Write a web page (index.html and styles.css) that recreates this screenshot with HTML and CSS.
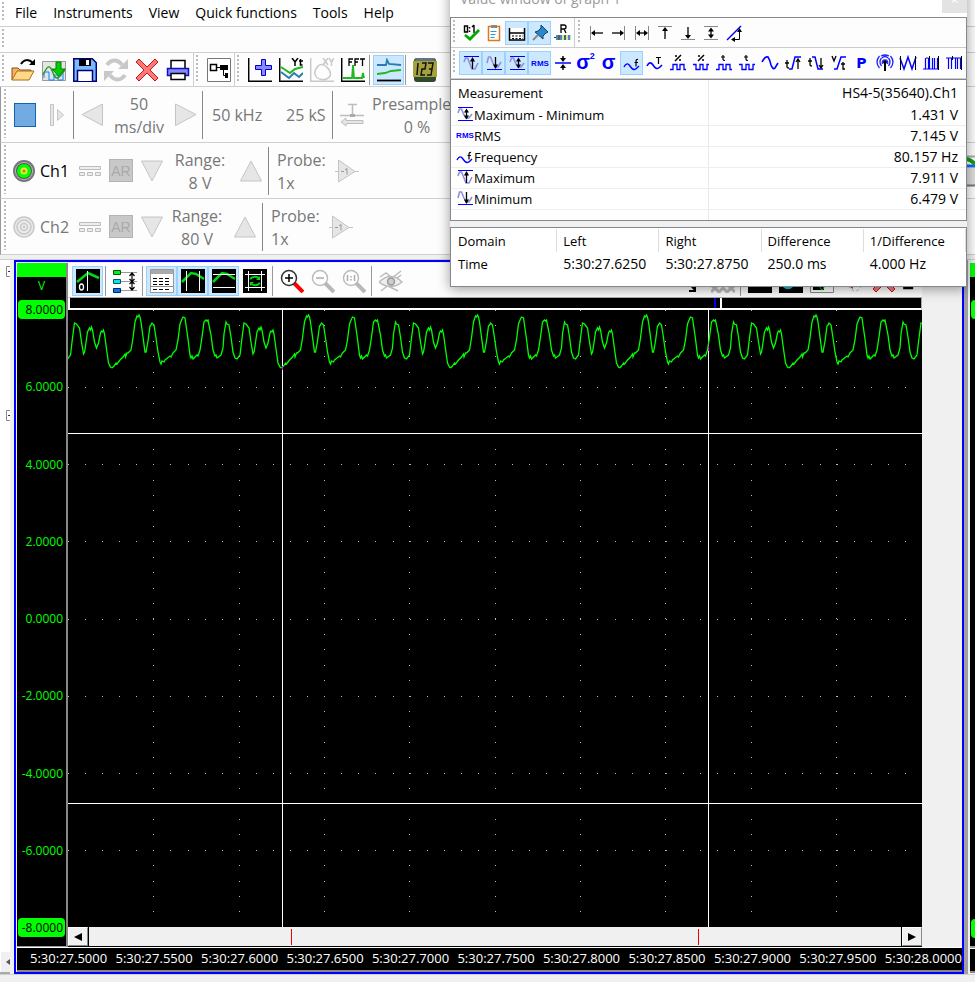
FILE: index.html
```html
<!DOCTYPE html>
<html lang="en">
<head>
<meta charset="utf-8">
<title>Oscilloscope</title>
<link rel="stylesheet" href="styles.css">
</head>
<body>
<svg class="defs" aria-hidden="true">
  <defs>
    <symbol id="max" viewBox="0 0 18 18"><path d="M2 2.500h15" stroke="#00f"/><path d="M2 8l1.500-4h2L8 10l2 5h3l3-6" fill="none" stroke="#8f8fe0" stroke-width="1.600"/><path d="M10.500 15V5" stroke="#000" stroke-width="1.300"/><path d="M10.500 3l2.500 4.500H8z"/></symbol>
    <symbol id="min" viewBox="0 0 18 18"><path d="M2 15.500h15" stroke="#00f"/><path d="M2 9l1.500-6h2L8 9l2 4h3l3-5" fill="none" stroke="#8f8fe0" stroke-width="1.600"/><path d="M10.500 3v9" stroke="#000" stroke-width="1.300"/><path d="M10.500 15L8 10.500h5z"/></symbol>
    <symbol id="maxmin" viewBox="0 0 18 18"><path d="M2 2.500h15M2 15.500h15" stroke="#00f"/><path d="M2 8l1.500-4h2L8 10l2 3h3l3-4" fill="none" stroke="#8f8fe0" stroke-width="1.600"/><path d="M10.500 6v6" stroke="#000" stroke-width="1.300"/><path d="M10.500 3.500l2.500 4H8zM10.500 14.500l-2.500-4h5z"/></symbol>
    <symbol id="rms" viewBox="0 0 18 18"><text x="9" y="12" text-anchor="middle" font-family="Liberation Sans, sans-serif" font-size="8" font-weight="700" fill="#00f">RMS</text></symbol>
    <symbol id="freq" viewBox="0 0 18 18"><path d="M1 13c2-4 4-4 6-1s4 5 7 2l2-2" fill="none" stroke="#00f" stroke-width="1.400"/><path d="M15 5.500q-2-.5-2 2v5M11.500 8.500H15" fill="none" stroke="#000" stroke-width="1.200"/></symbol>
    <symbol id="pulse" viewBox="0 0 18 18"><path d="M1 15.500h3v-5h4v5h3v-5h4v5h2" fill="none" stroke="#00f" stroke-width="1.300"/></symbol>
    <symbol id="pulsen" viewBox="0 0 18 18"><path d="M1 10.500h3v5h4v-5h3v5h4v-5h2" fill="none" stroke="#00f" stroke-width="1.300"/></symbol>
    <symbol id="pct" viewBox="0 0 18 18"><path d="M6 7l6-6M6 2h2M10 6h2" stroke="#000" stroke-width="1.500"/></symbol>
    <symbol id="tee" viewBox="0 0 18 18"><path d="M8 1v4.500q0 1 2 1M6 3h4" fill="none" stroke="#000" stroke-width="1.200"/></symbol>
    <symbol id="lens" viewBox="0 0 24 24"><circle cx="9" cy="9" r="7.500" fill="#fff"/><circle cx="9" cy="9" r="7.500" fill="none" stroke="currentColor" stroke-width="1.500"/></symbol>
  </defs>
</svg>

<nav class="menu bar">
  <i class="grip"></i>
  <a href="#">File</a><a href="#">Instruments</a><a href="#">View</a><a href="#">Quick functions</a><a href="#">Tools</a><a href="#">Help</a>
</nav>
<div class="bar empty"><i class="grip"></i></div>

<div class="bar tools">
  <div class="group"><i class="grip"></i>
    <button aria-label="Open"><svg viewBox="0 0 24 24"><path d="M1 22V10h6l2 2h11v4" fill="#f6b26b" stroke="#8a4a10"/><path d="M1 22l5-9h17l-5 9z" fill="#ffd98a" stroke="#b06a10"/><path d="M10 6c3-5 8-5 12-1" fill="none" stroke="#000" stroke-width="2"/><path d="M24 1v6h-6z"/></svg></button>
    <button aria-label="Import"><svg viewBox="0 0 24 24"><path d="M.5 3.500h23v19H.5z" fill="#e4e4e4" stroke="#999"/><path d="M2 20V14h5v8h5v-5h4v5h5v-9h2" fill="none" stroke="#0a84ff"/><path d="M1 17c5-11 7-10 10-2s6 6 12-4" fill="none" stroke="#2a9a2a" stroke-width="1.500"/><path d="M14 4h5v7h4l-6.500 7L10 11h4z" fill="#00d000" stroke="#0a7a0a"/></svg></button>
    <button aria-label="Save"><svg viewBox="0 0 24 24"><path d="M.8.800h18.500l4 4v18.500H.8z" fill="#7ab8ff" stroke="#00007a" stroke-width="1.500"/><path d="M6 1h12v7H6z"/><path d="M13 2h3v5h-3z" fill="#fff"/><path d="M4.500 23V12.500h15V23" fill="#fff" stroke="#00007a" stroke-width="1.500"/></svg></button>
    <button aria-label="Refresh"><svg viewBox="0 0 24 24" fill="none" stroke="#c8c8c8" stroke-width="4"><path d="M3 7c4-6 11-6 15 0M21 17c-4 6-11 6-15 0"/><path d="M24 1v10H14zM0 23V13h10z" fill="#c8c8c8" stroke="none"/></svg></button>
    <button aria-label="Delete"><svg viewBox="0 0 24 24"><path d="M4 1l8 8 8-8 3 3-8 8 8 8-3 3-8-8-8 8-3-3 8-8-8-8z" fill="#f77" stroke="#c01818"/></svg></button>
    <button aria-label="Print"><svg viewBox="0 0 24 24" stroke-width="1.500"><path d="M5 11V2.500h14V11" fill="#fff" stroke="#000"/><path d="M1.500 10.500h21v7h-21z" fill="#8888ff" stroke="#1010c0"/><path d="M5 15.500h14v6H5z" fill="#fff" stroke="#000"/></svg></button>
  </div>
  <div class="group"><i class="grip"></i>
    <button aria-label="Object tree"><svg viewBox="0 0 24 24"><path d="M.5.500h23v23H.5z" fill="#fff" stroke="#777"/><path d="M3.500 6.500h6v6h-6z" fill="#fff" stroke="#000" stroke-width="1.500"/><path d="M10 9.500h4M16.500 10v7.500H19" fill="none" stroke="#000"/><path d="M13 7h8v5h-8zM18 15h3v5h-3z"/></svg></button>
  </div>
  <div class="group last"><i class="grip"></i>
    <button aria-label="Add graph"><svg viewBox="0 0 24 24"><path d="M.7 0v23.300H24" fill="none" stroke="#000" stroke-width="1.500"/><path d="M13.500 1.500h4v6h6v4h-6v6h-4v-6h-6v-4h6z" fill="#88f" stroke="#00c"/></svg></button>
    <button aria-label="Yt graph"><svg viewBox="0 0 24 24"><path d="M.7 0v23.300H24" fill="none" stroke="#000" stroke-width="1.500"/><path d="M2 9l9 6 5-4 8-2" fill="none" stroke="#1fb81f" stroke-width="2"/><path d="M2 14l8 6 5-5 5 4 4-4" fill="none" stroke="#2b7bb0" stroke-width="2"/><path d="M13 0l3 4 3-4M16 4v4M21.500 1v6h2M20 3h4" fill="none" stroke="#000" stroke-width="1.500"/></svg></button>
    <button aria-label="XY graph"><svg viewBox="0 0 24 24" fill="none" stroke="#c9c9c9" stroke-width="1.500"><path d="M.7 0v23.300H24"/><path d="M8 8c6-5 14 5 12 10-4 6-14 4-15-2q-1-3 3-8M13 0l5 7M18 0l-5 7M19 0l2.500 4L24 0M21.500 4v4"/></svg></button>
    <button aria-label="FFT graph"><svg viewBox="0 0 24 24"><path d="M.7 0v23.300H24" fill="none" stroke="#000" stroke-width="1.500"/><path d="M2 20h9l1-13 1 13h8l1-5 1 5" fill="none" stroke="#1fb81f" stroke-width="1.800"/><path d="M8 8V1h4M8 4h3M14 8V1h4M14 4h3M19 1h5M21.500 1v7" fill="none" stroke="#000" stroke-width="1.300"/></svg></button>
    <i class="sep"></i>
    <button class="on" aria-label="Auto graph"><svg viewBox="0 0 24 24" fill="none" stroke-width="1.800"><path d="M0 7h9l1-5 2 4 12 1" stroke="#2b7bb0"/><path d="M0 16l8-1 6-2 10-1" stroke="#1fb81f"/><path d="M0 22.500h24" stroke="#000"/></svg></button>
    <i class="sep"></i>
    <button aria-label="Meter"><svg viewBox="0 0 24 24"><rect x="1" width="22" height="24" rx="3" fill="#2d4a2d"/><path d="M3 0h18l1 3H2z" fill="#63737f"/><path d="M0 3h24v16H0z" fill="#a5a23d"/><path d="M5 5L4 17M9 5h4l-1 6H9l-1 6h4M15 5h5l-2 12h-4M16 11h3" fill="none" stroke="#111" stroke-width="1.500"/></svg></button>
  </div>
</div>

<section class="bar inst base"><i class="grip"></i>
  <button class="stop" aria-label="Stop"></button>
  <button class="step" aria-label="One shot"><svg viewBox="0 0 14 22"><path d="M.5.500h3v21h-3zM7.500 5.500v11l6-5.500z" fill="#e6e6e6" stroke="#c4c4c4"/></svg></button>
  <i class="rule"></i>
  <button class="tri" aria-label="Shorter time base"><svg viewBox="0 0 22 24"><path d="M21.500 1v21.500L1 11.500z" fill="#e6e6e6" stroke="#c4c4c4"/></svg></button>
  <span class="two timediv">50<br>ms/div</span>
  <button class="tri" aria-label="Longer time base"><svg viewBox="0 0 22 24"><path d="M.5 1v21.500L21 11.500z" fill="#e6e6e6" stroke="#c4c4c4"/></svg></button>
  <i class="rule r2"></i>
  <span class="rate">50 kHz</span><span class="rec">25 kS</span>
  <i class="rule r2"></i>
  <svg class="trig" viewBox="0 0 24 24" fill="none" stroke="#bdbdbd"><path d="M8 1.500h9M12.500 1v11M0 12.500h24" stroke-width="1.500"/><path d="M10 11h5v3h-5z" fill="#aaa" stroke="none"/><path d="M1 19l5-4v2.500h17v3H6V23z" fill="#e6e6e6"/></svg>
  <span class="two pre"><b>Presample</b><br>0 %</span>
</section>

<section class="bar inst chan"><i class="grip"></i>
  <button class="led" aria-label="Channel 1 on"><svg viewBox="0 0 22 22"><circle cx="11" cy="11" r="11" fill="#777"/><circle cx="11" cy="11" r="9" fill="#bbb"/><circle cx="11" cy="11" r="8" fill="#555"/><circle cx="11" cy="11" r="7" fill="#0f0"/><circle cx="11" cy="11" r="3.500" fill="#f3e23c"/><circle cx="11" cy="11" r="1.500" fill="#a80"/></svg></button>
  <span class="name">Ch1</span>
  <svg class="dc" viewBox="0 0 22 10" fill="#eee" stroke="#bbb"><path d="M.5.500h21v3H.5zM.5 6.500h5v3h-5zM8.500 6.500h5v3h-5zM16.500 6.500h5v3h-5z"/></svg>
  <button class="ar">AR</button>
  <button class="tri" aria-label="Lower range"><svg viewBox="0 0 22 24"><path d="M.5 2h21L11 22z" fill="#e6e6e6" stroke="#c4c4c4"/></svg></button>
  <span class="two range">Range:<br>8 V</span>
  <button class="tri" aria-label="Higher range"><svg viewBox="0 0 22 24"><path d="M.5 22h21L11 2z" fill="#e6e6e6" stroke="#c4c4c4"/></svg></button>
  <i class="rule"></i>
  <span class="two probe">Probe:<br>1x</span>
  <button class="amp" aria-label="Invert"><svg viewBox="0 0 24 24"><path d="M0 12.500h24" stroke="#c4c4c4"/><path d="M3.500 1v22L20 12.500z" fill="#e6e6e6" stroke="#c4c4c4"/><path d="M6 12.500h3M10 11l2-1.500v6" fill="none" stroke="#999"/></svg></button>
  <button class="edge" aria-label="Channel view"><svg viewBox="0 0 10 32"><path d="M0 1.500h10" stroke="#aaa" stroke-width="2"/><path d="M0 4q5 0 10 5" fill="none" stroke="#159c15" stroke-width="4"/><path d="M0 11h10" stroke="#0a6fe8" stroke-width="3"/><path d="M2 13h8v17H2z" fill="#ddd"/><path d="M1.500 12v18" stroke="#0a6fe8"/><path d="M1 30.500h9" stroke="#777" stroke-width="2"/></svg></button>
</section>
<section class="bar inst chan ch2"><i class="grip"></i>
  <button class="led" aria-label="Channel 2 off"><svg viewBox="0 0 22 22" fill="#ececec" stroke="#c8c8c8" stroke-width="1.500"><circle cx="11" cy="11" r="10"/><circle cx="11" cy="11" r="7"/><circle cx="11" cy="11" r="3.500"/><circle cx="11" cy="11" r=".5"/></svg></button>
  <span class="name">Ch2</span>
  <svg class="dc" viewBox="0 0 22 10" fill="#eee" stroke="#bbb"><path d="M.5.500h21v3H.5zM.5 6.500h5v3h-5zM8.500 6.500h5v3h-5zM16.500 6.500h5v3h-5z"/></svg>
  <button class="ar">AR</button>
  <button class="tri" aria-label="Lower range"><svg viewBox="0 0 22 24"><path d="M.5 2h21L11 22z" fill="#e6e6e6" stroke="#c4c4c4"/></svg></button>
  <span class="two range">Range:<br>80 V</span>
  <button class="tri" aria-label="Higher range"><svg viewBox="0 0 22 24"><path d="M.5 22h21L11 2z" fill="#e6e6e6" stroke="#c4c4c4"/></svg></button>
  <i class="rule"></i>
  <span class="two probe">Probe:<br>1x</span>
  <button class="amp" aria-label="Invert"><svg viewBox="0 0 24 24"><path d="M0 12.500h24" stroke="#c4c4c4"/><path d="M3.500 1v22L20 12.500z" fill="#e6e6e6" stroke="#c4c4c4"/><path d="M6 12.500h3M10 11l2-1.500v6" fill="none" stroke="#999"/></svg></button>
</section>

<main>
  <aside class="tree">
    <button class="node" aria-label="Collapse sources"><svg viewBox="0 0 4 11"><path d="M4 .5H.5v10H4" fill="none" stroke="#888"/><path d="M2 5.500h2" stroke="#335"/></svg></button>
    <button class="node" aria-label="Collapse sinks"><svg viewBox="0 0 4 11"><path d="M4 .5H.5v10H4" fill="none" stroke="#888"/><path d="M2 5.500h2" stroke="#335"/></svg></button>
    <button class="treescroll" aria-label="Scroll left"><svg viewBox="0 0 4 6"><path d="M4 0v6L0 3z" fill="#555"/></svg></button>
  </aside>
  <section class="graph">
    <div class="upper">
      <div class="yaxis">
        <div class="cap"></div>
        <div class="unit">V</div>
        <div class="yvals"><span class="pill">8.0000</span><span>6.0000</span><span>4.0000</span><span>2.0000</span><span>0.0000</span><span>-2.0000</span><span>-4.0000</span><span>-6.0000</span><span class="pill">-8.0000</span></div>
      </div>
      <div class="scope">
        <div class="gtools">
          <button class="on" aria-label="Single axis"><svg viewBox="0 0 24 24"><path d="M0 0h24v24H0z"/><path d="M1 13L12 4l11 5" fill="none" stroke="#00d818" stroke-width="2.500"/><path d="M11.500 2v20" stroke="#fff"/><ellipse cx="5.500" cy="18" rx="2" ry="3" fill="none" stroke="#fff" stroke-width="1.300"/></svg></button>
          <i class="sep"></i>
          <button aria-label="Spread axes"><svg viewBox="0 0 24 24"><path d="M7 3.500h17M7 12.500h17M7 21.500h17" stroke="#999"/><path d="M.5 1.500h7v4h-7z" fill="#00f020" stroke="#050"/><path d="M.5 10.500h7v4h-7z" fill="#00e8e8" stroke="#055"/><path d="M.5 19.500h7v4h-7z" fill="#0878e8" stroke="#026"/><path d="M19 4v17M16.500 7L19 4l2.500 3M16.500 10l2.500 2.500 2.500-2.500M16.500 15l2.500-2.500 2.500 2.500M16.500 18l2.500 3 2.500-3" fill="none" stroke="#000" stroke-width="1.200"/></svg></button>
          <i class="sep"></i>
          <button class="on" aria-label="Value window"><svg viewBox="0 0 24 24"><path d="M.5.500h23v23H.5z" fill="#fff" stroke="#999"/><path d="M1 1h22v4H1z" fill="#aaa"/><path d="M3 9.500h18M3 12.500h18M3 15.500h18M3 20.500h18" stroke="#000" stroke-width="1.200" stroke-dasharray="4 2"/><path d="M1 17.500h22" stroke="#888"/></svg></button>
          <button class="on" aria-label="Vertical cursors"><svg viewBox="0 0 24 24"><path d="M0 0h24v24H0z"/><path d="M1 13L10 4l5 1 8 5" fill="none" stroke="#00d818" stroke-width="2.500"/><path d="M5.500 2v20M18.500 2v20" stroke="#fff"/></svg></button>
          <button class="on" aria-label="Horizontal cursors"><svg viewBox="0 0 24 24"><path d="M0 0h24v24H0z"/><path d="M1 13L10 4l5 1 8 5" fill="none" stroke="#00d818" stroke-width="2.500"/><path d="M1 5.500h22M1 18.500h22" stroke="#fff"/></svg></button>
          <button aria-label="Reset cursors"><svg viewBox="0 0 24 24"><path d="M0 0h24v24H0z"/><path d="M5.500 2v20M18.500 2v20M2 5.500h20M2 18.500h20" stroke="#fff"/><path d="M7 10q4-4 9-1M17 14q-4 4-9 1" fill="none" stroke="#00d818" stroke-width="2"/><path d="M17 7v4h-4zM7 17v-4h4z" fill="#00d818"/></svg></button>
          <i class="sep"></i>
          <button aria-label="Zoom in"><svg viewBox="0 0 24 24" color="#333"><path d="M14 14l9 9" stroke="#f00" stroke-width="4"/><use href="#lens"/><path d="M5 9h8M9 5v8" stroke="#000" stroke-width="1.500"/></svg></button>
          <button aria-label="Zoom out"><svg viewBox="0 0 24 24" color="#bbb"><path d="M14 14l9 9" stroke="#b8b8b8" stroke-width="4"/><use href="#lens"/><path d="M5 9h8" stroke="#aaa" stroke-width="1.500"/></svg></button>
          <button aria-label="Zoom 1:1"><svg viewBox="0 0 24 24" color="#bbb"><path d="M14 14l9 9" stroke="#b8b8b8" stroke-width="4"/><use href="#lens"/><path d="M5.500 6v6M12.500 6v6M9 7v1.500M9 10v1.500" stroke="#aaa" stroke-width="1.500"/></svg></button>
          <i class="sep"></i>
          <button aria-label="Visibility"><svg viewBox="0 0 24 24" fill="none" stroke="#bbb" stroke-width="1.500"><path d="M1 8l6-4 6 5 9-7M2 22L22 6M3 14l16 8"/><path d="M0 13q12-11 23 0-11 9-23 0z" fill="#eee"/><circle cx="12" cy="12.500" r="3.500" fill="#ccc" stroke="#999"/></svg></button>
          <div class="more">
            <button aria-label="Resize"><svg viewBox="0 0 24 24"><path d="M9 14l6 7M15 16v6H9" fill="none" stroke="#000" stroke-width="2"/></svg></button>
            <button aria-label="Clear overlays"><svg viewBox="0 0 24 24"><path d="M0 23l12-12 12 12M0 16l8 7 4-4 4 4 8-7" fill="none" stroke="#bbb" stroke-width="3"/></svg></button>
            <i class="sep"></i>
            <button aria-label="Color scheme"><svg viewBox="0 0 24 24"><path d="M0 0h24v24H0z"/></svg></button>
            <button aria-label="Line style"><svg viewBox="0 0 24 24"><path d="M0 0h24v24H0z"/><circle cx="9" cy="14" r="5" fill="none" stroke="#00c8d8" stroke-width="2.500"/><path d="M14 15h8" stroke="#00c8d8" stroke-width="2"/></svg></button>
            <button aria-label="Copy"><svg viewBox="0 0 24 24"><path d="M.5.500h23v23H.5z" fill="#fff" stroke="#888"/><path d="M3 3h11v18H3z"/><path d="M5 18q3-6 5 0t4 0" fill="none" stroke="#0c0"/></svg></button>
            <button aria-label="Settings"><svg viewBox="0 0 24 24"><circle cx="14" cy="16" r="6" fill="#fff" stroke="#bbb" stroke-dasharray="3 2"/><path d="M9 18l3 2v-4z" fill="#c33"/></svg></button>
            <button aria-label="Remove graph"><svg viewBox="0 0 24 24"><path d="M4 1l8 8 8-8 3 3-8 8 8 8-3 3-8-8-8 8-3-3 8-8-8-8z" fill="#f77" stroke="#c01818"/></svg></button>
            <button aria-label="Pin graph"><svg viewBox="0 0 24 24"><path d="M8 8h6v11h3v3H5v-3h3z"/></svg></button>
          </div>
        </div>
        <div class="overview"><svg viewBox="0 0 851 10" preserveAspectRatio="none"><path d="M644 0h2v10h-2z" fill="#00f"/><path d="M650 0h2v10h-2z" fill="#fff"/></svg></div>
        <svg class="plot" viewBox="0 0 854 617" preserveAspectRatio="none" role="img" aria-label="Ch1 voltage against time">
          <g stroke="#b8b8b8" stroke-dasharray="1 16.080" shape-rendering="crispEdges"><path d="M0 77.500h854M0 154.500h854M0 231.500h854M0 309.500h854M0 386.500h854M0 463.500h854M0 540.500h854"/></g>
          <g stroke="#b8b8b8" stroke-dasharray="1 14.420" shape-rendering="crispEdges"><path d="M85.500 0v617M171.500 0v617M256.500 0v617M341.500 0v617M427.500 0v617M512.500 0v617M597.500 0v617M683.500 0v617M768.500 0v617"/></g>
          <g stroke="#fff" shape-rendering="crispEdges"><path d="M0 123.500h854M0 493.500h854M214.500 0v617M640.500 0v617"/></g>
          <defs><path id="beat" d="M0 58L2 56L4 53L5 54L8 50L11 47L13 44L13.500 47L15 43L16 43L19 40L21 28L23 12L25 6L26 7L27 5L28 7L29 12L31 27L33 42L34 42L36 31L38 16L39 15L40 13L42 15L44 28L46 42L48 52L49 54L50 51L52 52L53 50L58 46L59 47L61 43L64 40L66 30L68 14L70 9L71 7L73 8L74 15L76 29L78 45L79 48L80 46L81 49L85 45L86 46L88 40L90 27L92 12L94 10L95 11L96 10L99 25L101 40L103 46L104 45L105 48L109 45L111 38L112 24L114 12L115 14L117 15L119 27L121 42L123 48L125 49L128 45L130 28L132 13L134 14L137 18L139 32L141 44L142 42L143 36L145 22L147 18L148 20L149 17L150 20L152 32L154 38L156 33L158 23L159 21L160 22L161 20L162 24L164 39L166 53L168 57L169.300 58"/></defs>
          <g fill="none" stroke="#0f0" stroke-width="1.300"><use href="#beat" x="-125.500"/><use href="#beat" x="44"/><use href="#beat" x="213.500"/><use href="#beat" x="382.500"/><use href="#beat" x="551.500"/><use href="#beat" x="721"/></g>
          <path d="M214.500 56v4M640.500 36v5" stroke="#f0f"/>
        </svg>
        <div class="hscroll">
          <button aria-label="Scroll left"><svg viewBox="0 0 8 8"><path d="M8 0v8L0 4z"/></svg></button>
          <div class="track"><svg viewBox="0 0 812 16" preserveAspectRatio="none"><path d="M202.500 0v16M609.500 0v16" stroke="#e00"/></svg></div>
          <button aria-label="Scroll right"><svg viewBox="0 0 8 8"><path d="M0 0v8l8-4z"/></svg></button>
        </div>
      </div>
    </div>
    <div class="xaxis"><span>5:30:27.5000</span><span>5:30:27.5500</span><span>5:30:27.6000</span><span>5:30:27.6500</span><span>5:30:27.7000</span><span>5:30:27.7500</span><span>5:30:27.8000</span><span>5:30:27.8500</span><span>5:30:27.9000</span><span>5:30:27.9500</span><span>5:30:28.0000</span></div>
  </section>
  <section class="next">
    <div class="nbody"><div class="cap"></div><div class="yvals"><span class="pill"></span><span class="pill"></span></div></div>
    <div class="nfoot"></div>
  </section>
</main>
<footer></footer>

<section class="window">
  <header><h1>Value window of graph 1</h1><button aria-label="Close">×</button></header>
  <div class="wbar">
    <div class="wgroup one"><i class="grip"></i>
      <button aria-label="Digits"><svg viewBox="0 0 18 18"><path d="M2.500 2h3v6h-3zM12 1v8M10 3l2-2" fill="none" stroke="#000" stroke-width="1.400"/><path d="M7.500 3v1.500M7.500 6.500V8" stroke="#000" stroke-width="1.500"/><path d="M3 11l5 4 9-9" fill="none" stroke="#0a0" stroke-width="2.800"/></svg></button>
      <button aria-label="Copy values"><svg viewBox="0 0 18 18"><path d="M3.500 2.500h11v14h-11z" fill="#fff" stroke="#e07818" stroke-width="1.500"/><path d="M6 1h6v3H6z" fill="#888"/><path d="M5.500 7.500h6M5.500 10.500h5M5.500 13.500h4" stroke="#18a0e8" stroke-width="1.200"/></svg></button>
      <button class="on" aria-label="Show measurements"><svg viewBox="0 0 18 18"><path d="M1.500 4v12h15V4M1 9h16" fill="#fff" stroke="#000" stroke-width="1.500"/><path d="M4 12h11M4 14.500h11" stroke="#000" stroke-dasharray="2 1.500"/></svg></button>
      <button class="on" aria-label="Keep on top"><svg viewBox="0 0 18 18"><path d="M10 1l7 7-2 1-3 3v3L4 8l3-1 3-3z" fill="#2b86cf" stroke="#145"/><path d="M7 11l-5 5" stroke="#888" stroke-width="2"/></svg></button>
      <button aria-label="Resistor"><svg viewBox="0 0 18 18"><path d="M7 9V1h3q2 0 2 2t-2 2H7M10 5l2 4" fill="none" stroke="#000" stroke-width="1.300"/><path d="M2 11h15v5H2z" fill="#cde8a0"/><path d="M3 11v5M7 11v5M15 11v5" stroke="#26c" stroke-width="1.500"/><path d="M5 11v5M11 11v5" stroke="#333" stroke-width="1.500"/><path d="M0 13.500h2" stroke="#333"/></svg></button>
      <i class="sep"></i><i class="grip"></i>
      <button aria-label="Left cursor"><svg viewBox="0 0 18 18"><path d="M3.500 2v14" stroke="#888"/><path d="M5 9h11" stroke="#000" stroke-width="1.300"/><path d="M4 9l4-3v6z"/></svg></button>
      <button aria-label="Right cursor"><svg viewBox="0 0 18 18"><path d="M14.500 2v14" stroke="#888"/><path d="M2 9h11" stroke="#000" stroke-width="1.300"/><path d="M14 9l-4-3v6z"/></svg></button>
      <button aria-label="Horizontal distance"><svg viewBox="0 0 18 18"><path d="M2.500 2v14M15.500 2v14" stroke="#888"/><path d="M5 9h8" stroke="#000" stroke-width="1.300"/><path d="M3 9l4-3v6zM15 9l-4-3v6z"/></svg></button>
      <button aria-label="Top cursor"><svg viewBox="0 0 18 18"><path d="M2 2.500h14" stroke="#888"/><path d="M9 5v10" stroke="#000" stroke-width="1.300"/><path d="M9 3l3 4H6z"/></svg></button>
      <button aria-label="Bottom cursor"><svg viewBox="0 0 18 18"><path d="M2 15.500h14" stroke="#888"/><path d="M9 3v10" stroke="#000" stroke-width="1.300"/><path d="M9 15l3-4H6z"/></svg></button>
      <button aria-label="Vertical distance"><svg viewBox="0 0 18 18"><path d="M2 2.500h14M2 15.500h14" stroke="#888"/><path d="M9 5v8" stroke="#000" stroke-width="1.300"/><path d="M9 3.500l3 4H6zM9 14.500l3-4H6z"/></svg></button>
      <button aria-label="Slope"><svg viewBox="0 0 18 18"><path d="M2 16L16 2" stroke="#00f" stroke-width="1.500"/><path d="M8 15.500h6.500V6" fill="none" stroke="#000"/><path d="M6 15.500l4-2.500v5zM14.500 4l2.500 4h-5z"/></svg></button>
    </div>
    <div class="wgroup"><i class="grip"></i>
      <button class="on" aria-label="Maximum"><svg><use href="#max"/></svg></button>
      <button class="on" aria-label="Minimum"><svg><use href="#min"/></svg></button>
      <button class="on" aria-label="Maximum - Minimum"><svg><use href="#maxmin"/></svg></button>
      <button class="on" aria-label="RMS"><svg><use href="#rms"/></svg></button>
      <button aria-label="Mean"><svg viewBox="0 0 18 18"><path d="M1 9h16" stroke="#00f" stroke-width="1.500"/><path d="M9 2v5M9 11v5" stroke="#000" stroke-width="1.500"/><path d="M9 8L6 4h6zM9 10l3 4H6z"/></svg></button>
      <button class="sig" aria-label="Variance">σ<sup>2</sup></button>
      <button class="sig" aria-label="Standard deviation">σ</button>
      <button class="on" aria-label="Frequency"><svg><use href="#freq"/></svg></button>
      <button aria-label="Period"><svg viewBox="0 0 18 18"><path d="M1 12c2-4 4-4 6-1s4 5 7 2l2-2" fill="none" stroke="#00f" stroke-width="1.600"/><path d="M10 3.500h5M12.500 3v7" stroke="#000" stroke-width="1.200"/></svg></button>
      <button aria-label="Duty cycle"><svg><use href="#pct"/><use href="#pulse"/></svg></button>
      <button aria-label="Negative duty cycle"><svg><use href="#pct"/><use href="#pulsen"/></svg></button>
      <button aria-label="Pulse width"><svg><use href="#tee"/><use href="#pulse"/></svg></button>
      <button aria-label="Negative pulse width"><svg><use href="#tee"/><use href="#pulsen"/></svg></button>
      <button aria-label="Crest"><svg viewBox="0 0 18 18"><path d="M1 8q3-6 6-5 2 3 3 8 2 5 4 3l3-5" fill="none" stroke="#00f" stroke-width="1.600"/></svg></button>
      <button aria-label="Rise time"><svg viewBox="0 0 18 18"><path d="M5 15h3l3-12h6" fill="none" stroke="#00f" stroke-width="1.500"/><path d="M3 6v7q0 1 2 1M1 9h4M14 15V5M12 8l2-3 2 3" fill="none" stroke="#000" stroke-width="1.300"/></svg></button>
      <button aria-label="Fall time"><svg viewBox="0 0 18 18"><path d="M5 3h3l3 12h5" fill="none" stroke="#00f" stroke-width="1.500"/><path d="M3 4v7q0 1 2 1M1 7h4M14 4v9M12 11l2 3 2-3" fill="none" stroke="#000" stroke-width="1.300"/></svg></button>
      <button aria-label="Slew rate"><svg viewBox="0 0 18 18"><path d="M4 15h3l4-12h5" fill="none" stroke="#00f" stroke-width="1.500"/><path d="M2 2l2 5 2-5M13 8v7h2M11 10h4" fill="none" stroke="#000" stroke-width="1.300"/></svg></button>
      <button class="pow" aria-label="Power">P</button>
      <button aria-label="Signal"><svg viewBox="0 0 18 18"><path d="M9 8v9" stroke="#000" stroke-width="2"/><circle cx="9" cy="8" r="2" fill="#000"/><path d="M5.500 12q-3-4 0-8M12.500 12q3-4 0-8M3.500 14q-5-6 0-12M14.500 14q5-6 0-12M6 4q3-3 6 0M5 2q4-2 8 0M6.500 10q-1-4 2.500-4t2.500 4" fill="none" stroke="#22f" stroke-width="1.300"/></svg></button>
      <button aria-label="Cycles"><svg viewBox="0 0 18 18"><path d="M1 4l4 11L9 3l4 12 4-12" fill="none" stroke="#00f" stroke-width="1.500"/><path d="M1.500 2v14M16.500 2v14" stroke="#000"/></svg></button>
      <button aria-label="Positive pulses"><svg viewBox="0 0 18 18"><path d="M1 15h2.500V4M6.500 4v11H3.500M6.500 15h1V4M10.500 4v11h-3M10.500 15h2V4M15.500 4v11h-3M4 4h2.500" fill="none" stroke="#00f" stroke-width="1.200"/><path d="M7.500 2v4M16.500 2v14" stroke="#000"/></svg></button>
      <button aria-label="Negative pulses"><svg viewBox="0 0 18 18"><path d="M1 4h2.500v11M6.500 15V4H3.500M6.500 4h4v11M10.500 4h2v11M15.500 15V4h-3" fill="none" stroke="#00f" stroke-width="1.200"/><path d="M7.500 2v4M16.500 2v14" stroke="#000"/></svg></button>
    </div>
  </div>
  <table class="meas">
    <thead><tr><th>Measurement</th><th>HS4-5(35640).Ch1</th></tr></thead>
    <tbody>
      <tr><td><svg><use href="#maxmin"/></svg>Maximum - Minimum</td><td>1.431 V</td></tr>
      <tr><td><svg><use href="#rms"/></svg>RMS</td><td>7.145 V</td></tr>
      <tr><td><svg><use href="#freq"/></svg>Frequency</td><td>80.157 Hz</td></tr>
      <tr><td><svg><use href="#max"/></svg>Maximum</td><td>7.911 V</td></tr>
      <tr><td><svg><use href="#min"/></svg>Minimum</td><td>6.479 V</td></tr>
      <tr class="pad"><td></td><td></td></tr>
    </tbody>
  </table>
  <div class="domain">
    <table>
      <thead><tr><th>Domain</th><th>Left</th><th>Right</th><th>Difference</th><th>1/Difference</th></tr></thead>
      <tbody><tr><td class="lbl">Time</td><td>5:30:27.6250</td><td>5:30:27.8750</td><td>250.0 ms</td><td>4.000 Hz</td></tr></tbody>
    </table>
  </div>
</section>
</body>
</html>
```

FILE: styles.css
```css
* { box-sizing: border-box; }
body {
  margin: 0;
  min-height: 100vh;
  display: flex;
  flex-direction: column;
  position: relative;
  overflow: hidden;
  background: #f0f0f0;
  color: #000;
  font-family: "Open Sans", "Noto Sans", sans-serif;
  font-size: 14px;
}
.defs { position: absolute; width: 0; height: 0; }
svg { display: block; }
button {
  border: 0;
  padding: 0;
  margin: 0;
  background: none;
  font: inherit;
  color: inherit;
  display: flex;
  align-items: center;
  justify-content: center;
  flex: none;
}

/* Stacked bars */
.bar {
  display: flex;
  align-items: center;
  background: #fdfdfd;
  border-bottom: 1px solid #cfcfcf;
  white-space: nowrap;
}
.grip {
  align-self: stretch;
  flex: none;
  width: 2px;
  margin: 2px 4px 4px 2px;
  background: repeating-linear-gradient(#bbb 0 2px, transparent 2px 4px);
}
.menu { height: 27px; gap: 16px; padding-bottom: 2px; background: #fff; }
.menu .grip { margin-right: -5px; }
.menu a { color: #000; text-decoration: none; }
.empty { height: 26px; }
.tools { height: 34px; }
.group { display: flex; align-items: center; align-self: stretch; border-right: 1px solid #cfcfcf; }
.group.last { border: 0; }
.group .grip { margin-right: 3px; }
.group button { width: 31px; height: 30px; }
.group + .group .grip { margin-right: 5px; }
.group button svg { width: 24px; height: 24px; }
.sep { flex: none; width: 1px; height: 30px; margin: 0 2px; background: #999; }
.group.last .sep { margin: 0 3px 0 1px; }
button.on { background: #cce8ff; border: 1px solid #99d1ff; }

/* Instrument rows */
.inst { height: 56px; border-left: 1px solid #999; color: #777; font-size: 16px; line-height: 23px; }
.inst .grip { margin-left: 3px; margin-right: 8px; }
.inst span { padding-top: 2px; }
.two { text-align: center; }
.rule { flex: none; width: 1px; height: 48px; background: #888; }
.tri svg { width: 22px; height: 24px; }
.stop { width: 22px; height: 24px; background: #72aae2; border: 1px solid #1463b0; }
.step { margin: 0 9px 0 14px; }
.step svg { width: 14px; height: 22px; }
.base .tri { margin-left: 7px; }
.timediv { width: 72px; }
.base .timediv + .tri { margin-left: 0; }
.base .r2 { margin: 0 9px 0 5px; }
.rate { width: 74px; }
.rec { width: 41px; }
.trig { width: 24px; height: 24px; flex: none; margin: 0 8px 0 -2px; }
.pre { width: 90px; }
.pre b { display: block; font-weight: 400; text-align: left; }
.pre br { display: none; }
.led svg { width: 22px; height: 22px; }
.chan .grip { margin-right: 7px; }
.name { color: #000; width: 39px; margin-left: 5px; }
.ch2 .name { color: #777; }
.dc { width: 22px; height: 10px; flex: none; margin-right: 8px; }
.ar { width: 24px; height: 23px; background: #c8c8c8; border: 1px solid #b4b4b4; color: #aaa; font: 14px "Liberation Sans", sans-serif; margin-right: 8px; }
.range { width: 52px; margin: 0 14px 0 11px; }
.chan .rule { margin: 0 8px 0 6px; }
.ch2 .range { margin: 0 11px 0 8px; }
.probe { width: 50px; margin-right: 8px; text-align: left; }
.amp svg { width: 24px; height: 24px; }
.edge { margin-left: auto; }
.edge svg { width: 10px; height: 32px; }

/* Work area */
main { flex: 1; display: flex; margin-top: 4px; border-top: 1px solid #cfcfcf; background: #f0f0f0; }
.tree { width: 10px; margin-right: 4px; background: #fff; display: flex; flex-direction: column; align-items: flex-end; border-bottom: 2px solid #aaa; }
.tree .node { margin-top: 6px; }
.tree .node + .node { margin-top: 133px; }
.tree .node svg { width: 4px; height: 11px; }
.treescroll { margin-top: auto; width: 9px; height: 20px; background: #f0f0f0; justify-content: flex-end; }
.treescroll svg { width: 4px; height: 6px; }
.graph { flex: 1; min-width: 0; display: flex; flex-direction: column; border: 2px solid #00f; background: #f0f0f0; }
.upper { flex: 1; display: flex; min-height: 0; padding: 1px 40px 0 1px; }
.yaxis { width: 51px; display: flex; flex-direction: column; background: #000; border-right: 2px solid #888; color: #0f0; font-size: 12px; border-bottom: 1px solid #999; }
.cap { height: 14px; background: #0f0; flex: none; }
.unit { height: 23px; line-height: 18px; text-align: center; flex: none; }
.yvals { flex: 1; display: flex; flex-direction: column; justify-content: space-between; padding: 0 1px; margin-bottom: 9px; }
.yvals span { height: 19px; line-height: 19px; text-align: right; padding-right: 2px; }
.yvals .pill { background: #0f0; color: #000; border-radius: 4px; }
.scope { flex: 1; min-width: 0; display: flex; flex-direction: column; }
.gtools { height: 34px; flex: none; display: flex; align-items: center; padding: 1px 0 0 4px; background: #fdfdfd; }
.gtools button { width: 31px; height: 30px; }
.gtools svg { width: 24px; height: 24px; }
.gtools .sep { margin: 0 3px 0 2px; }
.more { display: flex; align-items: center; margin-left: auto; padding-right: 3px; }
.more button:last-child { width: 20px; }
.overview { height: 13px; flex: none; border: 1px solid #aaa; border-left: 2px solid #fff; border-bottom: 2px solid #fff; background: #000; }
.overview svg { width: 100%; height: 100%; }
.plot { flex: 1; min-height: 0; width: 100%; background: #000; }
.hscroll { height: 20px; flex: none; display: flex; background: #f0f0f0; border-bottom: 1px solid #000; }
.hscroll button { width: 20px; border: 1px solid; border-color: #fff #888 #888 #fff; }
.hscroll button svg { width: 8px; height: 8px; }
.track { flex: 1; border: 1px solid #000; border-width: 0 1px; padding: 2px 0; }
.track svg { width: 100%; height: 16px; }
.xaxis { height: 25px; flex: none; margin-left: 1px; display: flex; justify-content: space-between; align-items: center; padding: 0 0 2px 13px; background: #000; border-top: 1px solid #fff; border-bottom: 2px solid #888; color: #fff; font-size: 13px; }
.next { width: 11px; padding: 3px 0 1px; display: flex; flex-direction: column; border-left: 4px solid #a0a0a0; }
.nbody { flex: 1; margin-left: 2px; background: #000; display: flex; flex-direction: column; border-bottom: 2px solid #999; }
.nbody .yvals { margin: 23px 0 8px; padding: 0 0 0 1px; }
.nbody .pill { border-radius: 4px 0 0 4px; }
.nfoot { height: 25px; margin-left: 2px; background: #000; border-top: 1px solid #fff; border-bottom: 2px solid #888; }
footer { height: 9px; border-top: 1px solid #d0d0d0; }

/* Floating value window */
.window {
  position: absolute;
  top: -14px;
  left: 450px;
  right: 8px;
  background: #f0f0f0;
  box-shadow: 0 2px 12px rgba(0, 0, 0, .4);
}
.window header { height: 31px; display: flex; justify-content: space-between; background: #fff; padding-left: 10px; color: #999; }
.window h1 { margin: 0; font-size: 14px; line-height: 25px; font-weight: 400; }
.window header button { width: 25px; height: 27px; background: #e3e3e3; color: #fff; }
.wbar { background: #fdfdfd; border: 1px solid #888; border-bottom-color: #ccc; }
.wgroup { display: flex; align-items: center; height: 30px; }
.wgroup .grip { margin-right: 4px; }
.wgroup button { width: 23px; height: 24px; }
.wgroup button svg { width: 18px; height: 18px; }
.one { border-bottom: 1px solid #ccc; }
.one .sep { margin: 0 1px 0 0; background: #ccc; }
.wgroup .sig { color: #00f; font: 700 20px "Liberation Sans", sans-serif; align-items: flex-start; }
.sig sup { font-size: 9px; line-height: 10px; }
.wgroup .pow { color: #00f; font: 700 14px "DejaVu Sans", sans-serif; }
table { border-collapse: separate; border-spacing: 0; width: 100%; table-layout: fixed; background: #fff; }
th, td { padding: 0; text-align: left; font-weight: 400; font-size: 14px; line-height: 20px; white-space: nowrap; }
.meas { border: 1px solid #828790; }
.meas th { height: 25px; padding-left: 7px; }
.meas td { height: 21px; border-bottom: 1px solid #eee; }
.meas th:first-child, .meas td:first-child { width: 50%; border-right: 1px solid #e8e8e8; font-size: 13px; }
.meas td:first-child { padding-left: 5px; }
.meas td svg { width: 18px; height: 18px; display: inline-block; vertical-align: top; }
.meas th + th, .meas td + td { text-align: right; padding-right: 8px; }
.meas .pad td { height: 10px; border-bottom: 0; }
.domain { margin-top: 6px; height: 60px; border: 1px solid #828790; background: #fff; padding-top: 1px; }
.domain th { height: 23px; width: 102px; font-size: 13px; border-right: 1px solid #ddd; padding-left: 6px; }
.domain th:first-child { width: 106px; padding-left: 7px; }
.domain td { height: 23px; padding-left: 6px; }
.domain .lbl { font-size: 13px; padding-left: 7px; }
```
